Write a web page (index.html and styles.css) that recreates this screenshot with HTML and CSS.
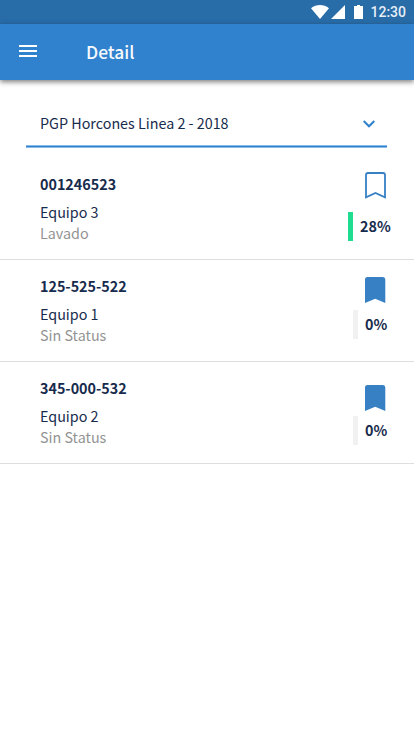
FILE: index.html
```html
<!DOCTYPE html>
<html lang="es">
<head>
  <meta charset="UTF-8">
  <meta name="viewport" content="width=device-width, initial-scale=1.0">
  <title>Detail</title>
  <link rel="stylesheet" href="styles.css">
</head>
<body>
  <!-- Status bar -->
  <div class="status-bar">
    <svg class="wifi" width="18" height="14" viewBox="0 0 18 14"><path d="M0 3.2C5.2-1 12.8-1 18 3.2L9 14z"/></svg>
    <svg class="signal" width="14" height="14" viewBox="0 0 14 14"><path d="M14 0v14H0z"/></svg>
    <svg class="battery" width="9" height="14" viewBox="0 0 9 14"><path d="M3 0h3v1h3v13H0V1h3z"/></svg>
    <span class="time">12:30</span>
  </div>

  <!-- App bar -->
  <header class="app-bar">
    <button class="menu-button" aria-label="Menu">
      <svg width="18" height="12" viewBox="0 0 18 12"><path d="M0 0h18v2H0zM0 5h18v2H0zM0 10h18v2H0z"/></svg>
    </button>
    <h1>Detail</h1>
  </header>

  <main>
    <div class="project-select">
      <span>PGP Horcones Linea 2 - 2018</span>
      <svg width="12" height="8" viewBox="0 0 12 8"><path d="M.7 1 6 6.3 11.3 1"/></svg>
    </div>

    <!-- Equipment list -->
    <ul class="list">
      <li class="item first">
        <div class="info">
          <h2>001246523</h2>
          <p>Equipo 3</p>
          <p class="status">Lavado</p>
        </div>
        <div class="side">
          <svg class="bookmark outline" width="21" height="27" viewBox="0 0 21 27"><path d="M3 1h15q2 0 2 2v22.3L10.5 21 1 25.3V3q0-2 2-2z"/></svg>
          <div class="progress active"><span>28%</span></div>
        </div>
      </li>
      <li class="item second">
        <div class="info">
          <h2>125-525-522</h2>
          <p>Equipo 1</p>
          <p class="status">Sin Status</p>
        </div>
        <div class="side">
          <svg class="bookmark" width="21" height="27" viewBox="0 0 21 27"><path d="M2.5 0H18q2.300 0 2.300 2.500V26L10.200 21.800 0 26V2.500Q0 0 2.500 0z"/></svg>
          <div class="progress"><span>0%</span></div>
        </div>
      </li>
      <li class="item third">
        <div class="info">
          <h2>345-000-532</h2>
          <p>Equipo 2</p>
          <p class="status">Sin Status</p>
        </div>
        <div class="side">
          <svg class="bookmark" width="21" height="27" viewBox="0 0 21 27"><path d="M2.5 0H18q2.300 0 2.300 2.500V26L10.200 21.800 0 26V2.500Q0 0 2.500 0z"/></svg>
          <div class="progress"><span>0%</span></div>
        </div>
      </li>
    </ul>
  </main>
</body>
</html>
```

FILE: styles.css
```css
* {
  box-sizing: border-box;
}

body {
  margin: 0;
  min-height: 736px;
  background-color: #fff;
  font-family: "Noto Sans CJK JP", sans-serif;
  font-size: 14.33px;
  color: #172b4d;
}

h1, h2, p, ul {
  margin: 0;
  padding: 0;
}

svg {
  display: block;
}

/* Status bar */
.status-bar {
  display: flex;
  align-items: center;
  justify-content: flex-end;
  height: 24px;
  padding-right: 8px;
  background-color: #286ca8;
  fill: #fff;
}

.signal {
  margin-left: 2px;
}

.battery {
  margin-left: 9px;
}

.time {
  margin-left: 7px;
  font-family: Roboto, sans-serif;
  font-size: 14px;
  font-weight: 500;
  line-height: 24px;
  color: #e6eef6;
}

/* App bar */
.app-bar {
  display: flex;
  align-items: center;
  height: 56px;
  padding-left: 19px;
  background-color: #3182ce;
  box-shadow: 0 2px 5px rgba(0, 0, 0, 0.5);
}

.app-bar h1 {
  margin-left: 49px;
  font-size: 17.4px;
  font-weight: 500;
  line-height: 56px;
  color: #f5f9fd;
}

.menu-button {
  padding: 0;
  margin-top: -2px;
  border: none;
  background: none;
  fill: #fff;
}

/* Select */
.project-select {
  display: flex;
  align-items: center;
  justify-content: space-between;
  height: 48px;
  margin: 20px 27px 0 26px;
  padding: 0 12px 0 14px;
  background: linear-gradient(#8abbe8 1px, #3182ce 1px 2px, #8abbe8 2px) bottom / 100% 3px no-repeat;
}

.project-select span {
  padding-bottom: 4px;
  line-height: 21px;
}

.project-select svg {
  fill: none;
  stroke: #3182ce;
  stroke-width: 2;
}

/* List */
.list {
  margin-top: 10px;
  list-style: none;
}

.item {
  display: flex;
  justify-content: space-between;
  height: 102px;
  padding: 14px 0 0 40px;
  border-bottom: 1px solid #dedede;
}

.item h2 {
  margin-bottom: 5px;
  font-size: 14.33px;
  font-weight: 700;
  line-height: 24px;
}

.item p {
  line-height: 21px;
}

.item .status {
  color: #939393;
}

.side {
  display: flex;
  flex-direction: column;
  align-items: flex-end;
}

.bookmark {
  margin-right: 28px;
  fill: #3780c4;
}

.outline {
  fill: none;
  stroke: #3780c4;
  stroke-width: 1.8;
}

.progress {
  display: flex;
  width: 34px;
  height: 29px;
  margin-right: 27px;
  padding-left: 7px;
  border-left: 5px solid #f1f1f1;
  font-weight: 700;
  line-height: 28px;
}

.progress.active {
  width: 43px;
  margin-right: 23px;
  border-left-color: #1edd91;
}

.first .progress {
  margin-top: 13px;
}

.second .side {
  margin-top: 3px;
}

.second .progress {
  margin-top: 6px;
}

.third .side {
  margin-top: 9px;
}

.third .progress {
  margin-top: 4px;
}
```
